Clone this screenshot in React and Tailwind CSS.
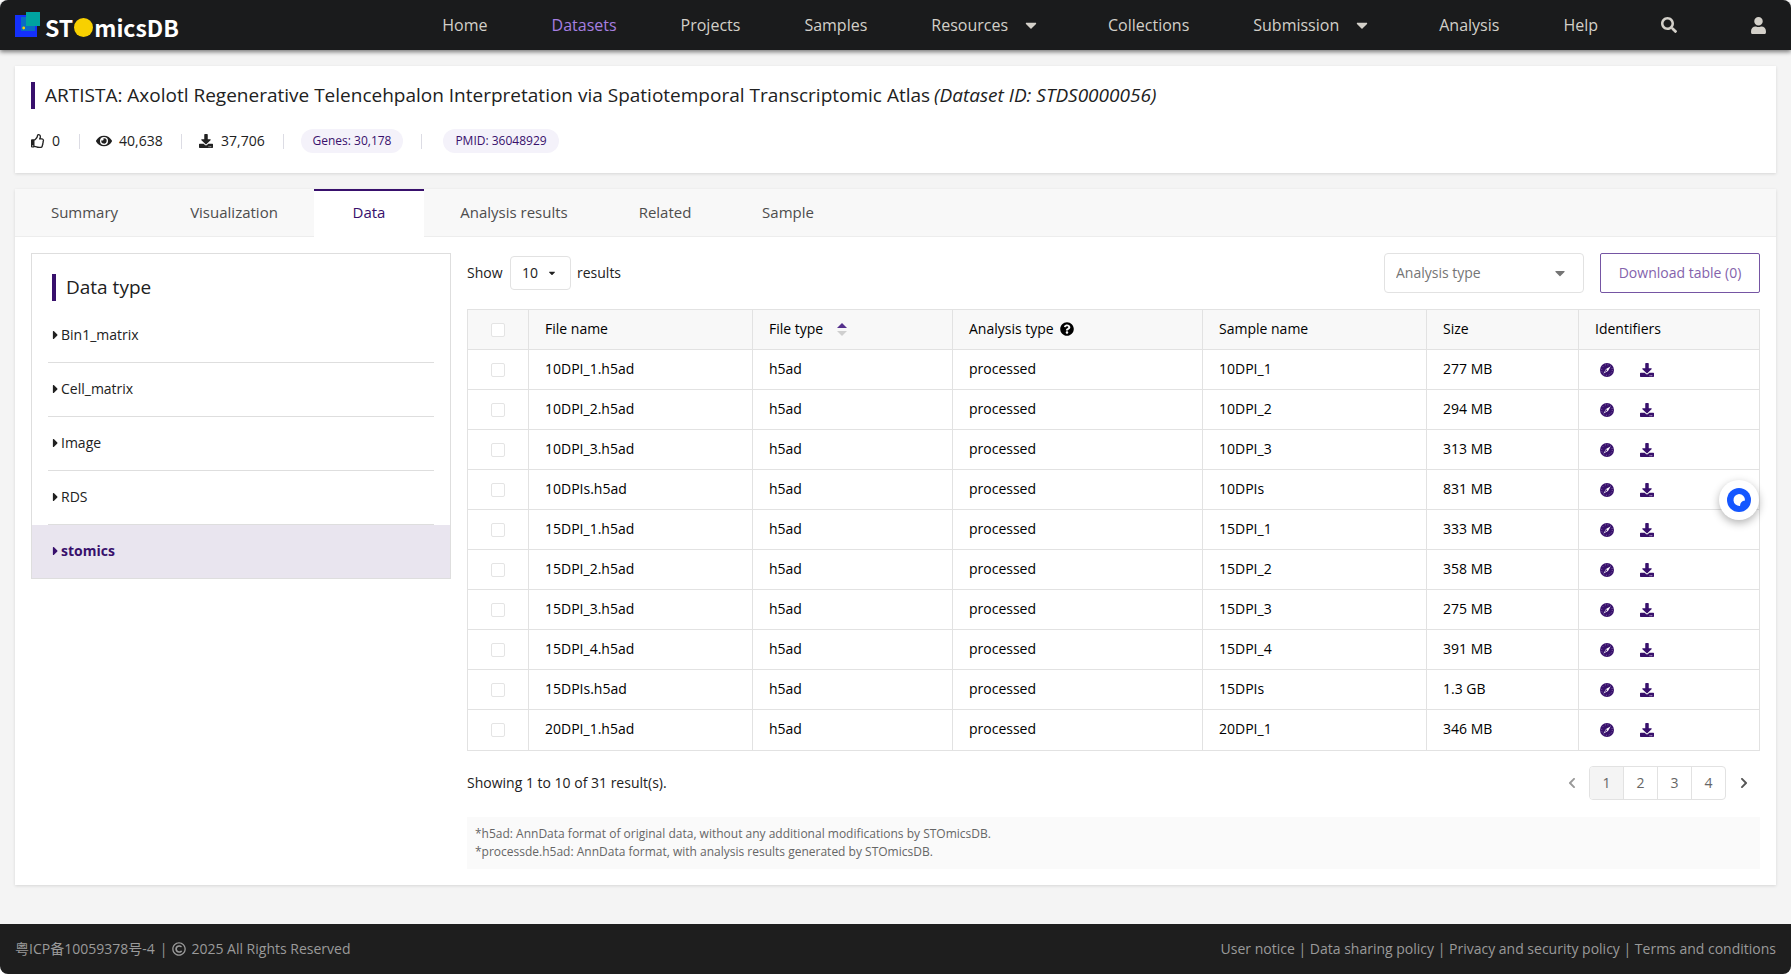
import React, { useState } from "react";
import {
   FaCaretDown,
   FaCaretRight,
   FaChevronLeft,
   FaChevronRight,
   FaDownload,
   FaEye,
   FaQuestionCircle,
   FaRegCopyright,
   FaRegThumbsUp,
   FaSearch,
   FaUser,
} from "react-icons/fa";

const navItems = [
   { name: "Home" },
   { name: "Datasets", active: true },
   { name: "Projects" },
   { name: "Samples" },
   { name: "Resources", menu: true },
   { name: "Collections" },
   { name: "Submission", menu: true },
   { name: "Analysis" },
   { name: "Help" },
];

const tabs = [
   { name: "Summary", width: "w-[139px]" },
   { name: "Visualization", width: "w-[160px]" },
   { name: "Data", width: "w-[110px]" },
   { name: "Analysis results", width: "w-[180px]" },
   { name: "Related", width: "w-[122px]" },
   { name: "Sample", width: "w-[124px]" },
];

const dataTypes = ["Bin1_matrix", "Cell_matrix", "Image", "RDS", "stomics"];

const files = [
   { sample: "10DPI_1", size: "277 MB" },
   { sample: "10DPI_2", size: "294 MB" },
   { sample: "10DPI_3", size: "313 MB" },
   { sample: "10DPIs", size: "831 MB" },
   { sample: "15DPI_1", size: "333 MB" },
   { sample: "15DPI_2", size: "358 MB" },
   { sample: "15DPI_3", size: "275 MB" },
   { sample: "15DPI_4", size: "391 MB" },
   { sample: "15DPIs", size: "1.3 GB" },
   { sample: "20DPI_1", size: "346 MB" },
];

const footerLinks = [
   "User notice",
   "Data sharing policy",
   "Privacy and security policy",
   "Terms and conditions",
];

function Logo() {
   return (
      <a href="#" className="flex items-center" aria-label="STOmicsDB">
         <svg width="26" height="26" viewBox="0 0 26 26" className="mr-1">
            <rect x="0" y="3" width="22" height="22" fill="#1430fa" />
            <rect x="6" y="5" width="14" height="14" fill="#0a6cc4" />
            <rect x="11" y="0" width="14" height="14" fill="#00a3a0" />
            <circle cx="8.7" cy="16" r="1.4" fill="#f8d000" />
         </svg>
         <span className="flex items-center pt-1 font-['Noto_Sans_CJK_SC',sans-serif] text-[23px] leading-6 font-bold text-white">
            ST
            <span className="mx-px h-[19px] w-[19px] rounded-full bg-[#f8d000]"></span>
            micsDB
         </span>
      </a>
   );
}

function Header() {
   return (
      <header className="relative flex h-[50px] items-center justify-between rounded-t-lg bg-[#1a1b1c] px-[15px] shadow-[0_2px_4px_rgba(0,0,0,0.5)]">
         <Logo />
         <nav className="flex items-center text-base text-[#d3d0c9]">
            {navItems.map((item) => (
               <a
                  key={item.name}
                  href="#"
                  className={`flex items-center px-8 ${item.active ? "text-[#a67fe0]" : ""}`}>
                  {item.name}
                  {item.menu && <FaCaretDown className="mr-1 ml-[14px] h-[18px] w-[18px]" />}
               </a>
            ))}
            <button type="button" aria-label="Search" className="ml-[31px]">
               <FaSearch className="h-4 w-4" />
            </button>
            <button type="button" aria-label="Account" className="mr-[9px] ml-[73px]">
               <FaUser className="h-[17px] w-[17px]" />
            </button>
         </nav>
      </header>
   );
}

function Divider() {
   return <span className="h-[15px] w-px bg-[#dcdce4]"></span>;
}

function DatasetCard() {
   return (
      <section className="mx-[15px] mt-4 h-[107px] bg-white px-4 pt-4 shadow-[0_1px_3px_rgba(0,0,0,0.12)]">
         <h1 className="flex h-[27px] items-center border-l-4 border-[#38106c] pl-[10px] text-[19px]">
            ARTISTA: Axolotl Regenerative Telencehpalon Interpretation via Spatiotemporal
            Transcriptomic Atlas
            <i className="ml-1">(Dataset ID: STDS0000056)</i>
         </h1>
         <div className="mt-5 flex h-6 items-center text-sm">
            <FaRegThumbsUp className="mr-[7px] h-[14px] w-[14px]" />
            <span className="w-[27px]">0</span>
            <Divider />
            <FaEye className="mr-[7px] ml-4 h-4 w-4" />
            <span className="w-[62px]">40,638</span>
            <Divider />
            <FaDownload className="mr-2 ml-[17px] h-[14px] w-[14px]" />
            <span className="w-[62px]">37,706</span>
            <Divider />
            <span className="mr-[18px] ml-[17px] flex h-6 w-[102px] items-center justify-center rounded-full bg-[#f4f2fa] text-xs text-[#38106c]">
               Genes: 30,178
            </span>
            <Divider />
            <a
               href="#"
               className="ml-[21px] flex h-6 w-[116px] items-center justify-center rounded-full bg-[#f4f2fa] text-xs text-[#38106c]">
               PMID: 36048929
            </a>
         </div>
      </section>
   );
}

function Tabs({ current, onChange }) {
   return (
      <div role="tablist" className="flex h-12 bg-[#f8f8f8] text-[15px] text-[#4d4d4d]">
         {tabs.map((tab) => (
            <button
               key={tab.name}
               type="button"
               role="tab"
               aria-selected={current === tab.name}
               onClick={() => onChange(tab.name)}
               className={`${tab.width} border-t-2 ${
                  current === tab.name
                     ? "border-[#38106c] bg-white pb-1 text-[#38106c]"
                     : "border-b border-t-transparent border-b-[#ededed] pb-[3px]"
               }`}>
               {tab.name}
            </button>
         ))}
         <span className="flex-1 border-b border-[#ededed]"></span>
      </div>
   );
}

function DataTypeList({ current, onChange }) {
   return (
      <aside className="w-[420px] shrink-0 border border-[#dedede]">
         <h2 className="mt-5 ml-5 flex h-[27px] items-center border-l-4 border-[#38106c] pl-[10px] text-[19px]">
            Data type
         </h2>
         <ul className="mt-2 text-sm">
            {dataTypes.map((type, index) => (
               <li key={type} className={current === type ? "bg-[#e9e5ef]" : ""}>
                  <button
                     type="button"
                     onClick={() => onChange(type)}
                     className={`flex h-[53px] w-full items-center pb-px pl-[19px] ${
                        current === type ? "font-bold text-[#38106c]" : ""
                     }`}>
                     <FaCaretRight className="mr-px h-[14px] w-[9px]" />
                     {type}
                  </button>
                  {index < dataTypes.length - 1 && (
                     <div className="mx-4 h-px bg-[#dedede]"></div>
                  )}
               </li>
            ))}
         </ul>
      </aside>
   );
}

// White compass face with a ring of ticks and a diagonal needle
function CompassIcon() {
   return (
      <svg width="14" height="14" viewBox="0 0 28 28">
         <circle cx="14" cy="14" r="14" fill="#38106c" />
         <circle
            cx="14"
            cy="14"
            r="10.6"
            fill="none"
            stroke="#c9bfdc"
            strokeWidth="1.4"
            strokeDasharray="1.4 4.15"
         />
         <path d="M21 7 L16 16 L7 21 L12 12 Z" fill="#fff" />
         <path d="M14.6 14.6 L12.4 12.4 L9 19 Z" fill="#38106c" />
      </svg>
   );
}

function Checkbox({ label }) {
   return (
      <input
         type="checkbox"
         aria-label={label}
         className="mx-auto block h-[14px] w-[14px] appearance-none rounded-xs border border-[#e4e4e4] bg-white checked:bg-[#38106c]"
      />
   );
}

function FileTable() {
   const cell = "border border-[#e2e2e2] px-4 text-left font-normal";
   const textCell = "border border-[#e2e2e2] px-4 pb-0.5 text-left font-normal";

   return (
      <table className="mt-4 w-full table-fixed border-collapse text-sm text-black">
         <colgroup>
            <col className="w-[61px]" />
            <col className="w-[224px]" />
            <col className="w-[200px]" />
            <col className="w-[250px]" />
            <col className="w-[224px]" />
            <col className="w-[152px]" />
            <col />
         </colgroup>
         <thead>
            <tr className="h-10 bg-[#f8f8f8]">
               <th className={cell}>
                  <Checkbox label="Select all files" />
               </th>
               <th className={textCell}>File name</th>
               <th className={textCell}>
                  <span className="flex items-center">
                     File type
                     <svg width="10" height="14" viewBox="0 0 10 14" className="mt-0.5 ml-[14px]">
                        <path d="M0 5 L5 0 L10 5 Z" fill="#55308c" />
                        <path d="M0 8 L5 13 L10 8 Z" fill="#cfcfcf" />
                     </svg>
                  </span>
               </th>
               <th className={textCell}>
                  <span className="flex items-center">
                     Analysis type <FaQuestionCircle className="ml-[6px] h-[14px] w-[14px]" />
                  </span>
               </th>
               <th className={textCell}>Sample name</th>
               <th className={textCell}>Size</th>
               <th className={textCell}>Identifiers</th>
            </tr>
         </thead>
         <tbody>
            {files.map((file) => (
               <tr key={file.sample} className="h-10 last:h-[41px]">
                  <td className={cell}>
                     <Checkbox label={`Select ${file.sample}.h5ad`} />
                  </td>
                  <td className={textCell}>{file.sample}.h5ad</td>
                  <td className={textCell}>h5ad</td>
                  <td className={textCell}>processed</td>
                  <td className={textCell}>{file.sample}</td>
                  <td className={textCell}>{file.size}</td>
                  <td className={cell}>
                     <span className="flex items-center gap-[26px] pl-[5px] text-[#38106c]">
                        <a href="#" aria-label={`Explore ${file.sample}`}>
                           <CompassIcon />
                        </a>
                        <a href="#" aria-label={`Download ${file.sample}`}>
                           <FaDownload className="h-[14px] w-[14px]" />
                        </a>
                     </span>
                  </td>
               </tr>
            ))}
         </tbody>
      </table>
   );
}

function Toolbar() {
   return (
      <div className="flex h-10 items-center text-sm">
         <label htmlFor="pageSize" className="w-[43px]">
            Show
         </label>
         <span className="relative mr-[6px] flex items-center">
            <select
               id="pageSize"
               defaultValue="10"
               className="h-[34px] w-[61px] appearance-none rounded border border-[#e2e2e2] pl-[11px]">
               <option>10</option>
               <option>20</option>
               <option>50</option>
            </select>
            <FaCaretDown className="pointer-events-none absolute right-[14px] h-[10px] w-[10px]" />
         </span>
         results
         <span className="relative mr-4 ml-auto flex items-center text-[#757575]">
            <select
               aria-label="Analysis type"
               className="h-10 w-[200px] appearance-none rounded border border-[#e2e2e2] pl-[11px]">
               <option>Analysis type</option>
               <option>processed</option>
            </select>
            <FaCaretDown className="pointer-events-none absolute right-4 h-4 w-4" />
         </span>
         <button
            type="button"
            className="h-10 w-[160px] rounded-xs border border-[#7555a3] text-[#8463ac]">
            Download table (0)
         </button>
      </div>
   );
}

function Pagination() {
   const [page, setPage] = useState(1);

   return (
      <div className="mt-[15px] flex h-[34px] items-center text-sm">
         <p className="flex-1">Showing 1 to 10 of 31 result(s).</p>
         <button
            type="button"
            aria-label="Previous page"
            onClick={() => setPage(Math.max(1, page - 1))}
            className="mr-[13px] text-[#999999]">
            <FaChevronLeft className="h-3 w-2" />
         </button>
         <div className="flex h-[34px] w-[137px] divide-x divide-[#e2e2e2] overflow-hidden rounded border border-[#e2e2e2]">
            {[1, 2, 3, 4].map((number) => (
               <button
                  key={number}
                  type="button"
                  onClick={() => setPage(number)}
                  className={`flex-1 text-[#666666] ${page === number ? "bg-[#f4f4f4]" : ""}`}>
                  {number}
               </button>
            ))}
         </div>
         <button
            type="button"
            aria-label="Next page"
            onClick={() => setPage(Math.min(4, page + 1))}
            className="mr-3 ml-[14px] text-[#555555]">
            <FaChevronRight className="h-3 w-2" />
         </button>
      </div>
   );
}

function Footer() {
   return (
      <footer className="mt-auto flex h-[50px] items-center justify-between rounded-b-lg bg-[#1e1e1e] px-[15px] text-sm text-[#9a9a9a]">
         <p className="flex items-center">
            <a href="#">粤ICP备10059378号-4</a>
            <span className="mx-[5px]">|</span>
            <FaRegCopyright className="mr-[5px] h-[14px] w-[14px]" />
            2025 All Rights Reserved
         </p>
         <p>
            {footerLinks.map((link, index) => (
               <React.Fragment key={link}>
                  {index > 0 && " | "}
                  <a href="#">{link}</a>
               </React.Fragment>
            ))}
         </p>
      </footer>
   );
}

export default function App() {
   const [tab, setTab] = useState("Data");
   const [dataType, setDataType] = useState("stomics");

   return (
      <div className="flex min-h-screen flex-col rounded-lg bg-[#f4f4f4] font-['Open_Sans','Noto_Sans_CJK_SC',sans-serif] text-[#212121]">
         <Header />
         <DatasetCard />

         {/* Tabs and data panel */}
         <main className="mx-[15px] mt-4 mb-[39px] bg-white shadow-[0_1px_3px_rgba(0,0,0,0.12)]">
            <Tabs current={tab} onChange={setTab} />
            <div className="flex items-start gap-4 p-4">
               <DataTypeList current={dataType} onChange={setDataType} />
               <div className="flex-1">
                  <Toolbar />
                  <FileTable />
                  <Pagination />
                  <div className="mt-[17px] bg-[#fafafa] p-2 text-xs leading-[18px] text-[#666666]">
                     <p>
                        *h5ad: AnnData format of original data, without any additional
                        modifications by STOmicsDB.
                     </p>
                     <p>
                        *processde.h5ad: AnnData format, with analysis results generated by
                        STOmicsDB.
                     </p>
                  </div>
               </div>
            </div>
         </main>

         <Footer />

         {/* Floating assistant button */}
         <button
            type="button"
            aria-label="Open assistant"
            className="fixed top-[480px] right-8 flex h-10 w-10 items-center justify-center rounded-full bg-white shadow-[0_3px_8px_rgba(0,0,0,0.3)]">
            <svg width="24" height="24" viewBox="0 0 24 24">
               <circle cx="12" cy="12" r="12" fill="#1456ff" />
               <path
                  d="M12 6 A6 6 0 0 1 18 12.5 Q13.2 13 13 18 A6 6 0 1 1 12 6 Z"
                  fill="#fff"
               />
            </svg>
         </button>
      </div>
   );
}
